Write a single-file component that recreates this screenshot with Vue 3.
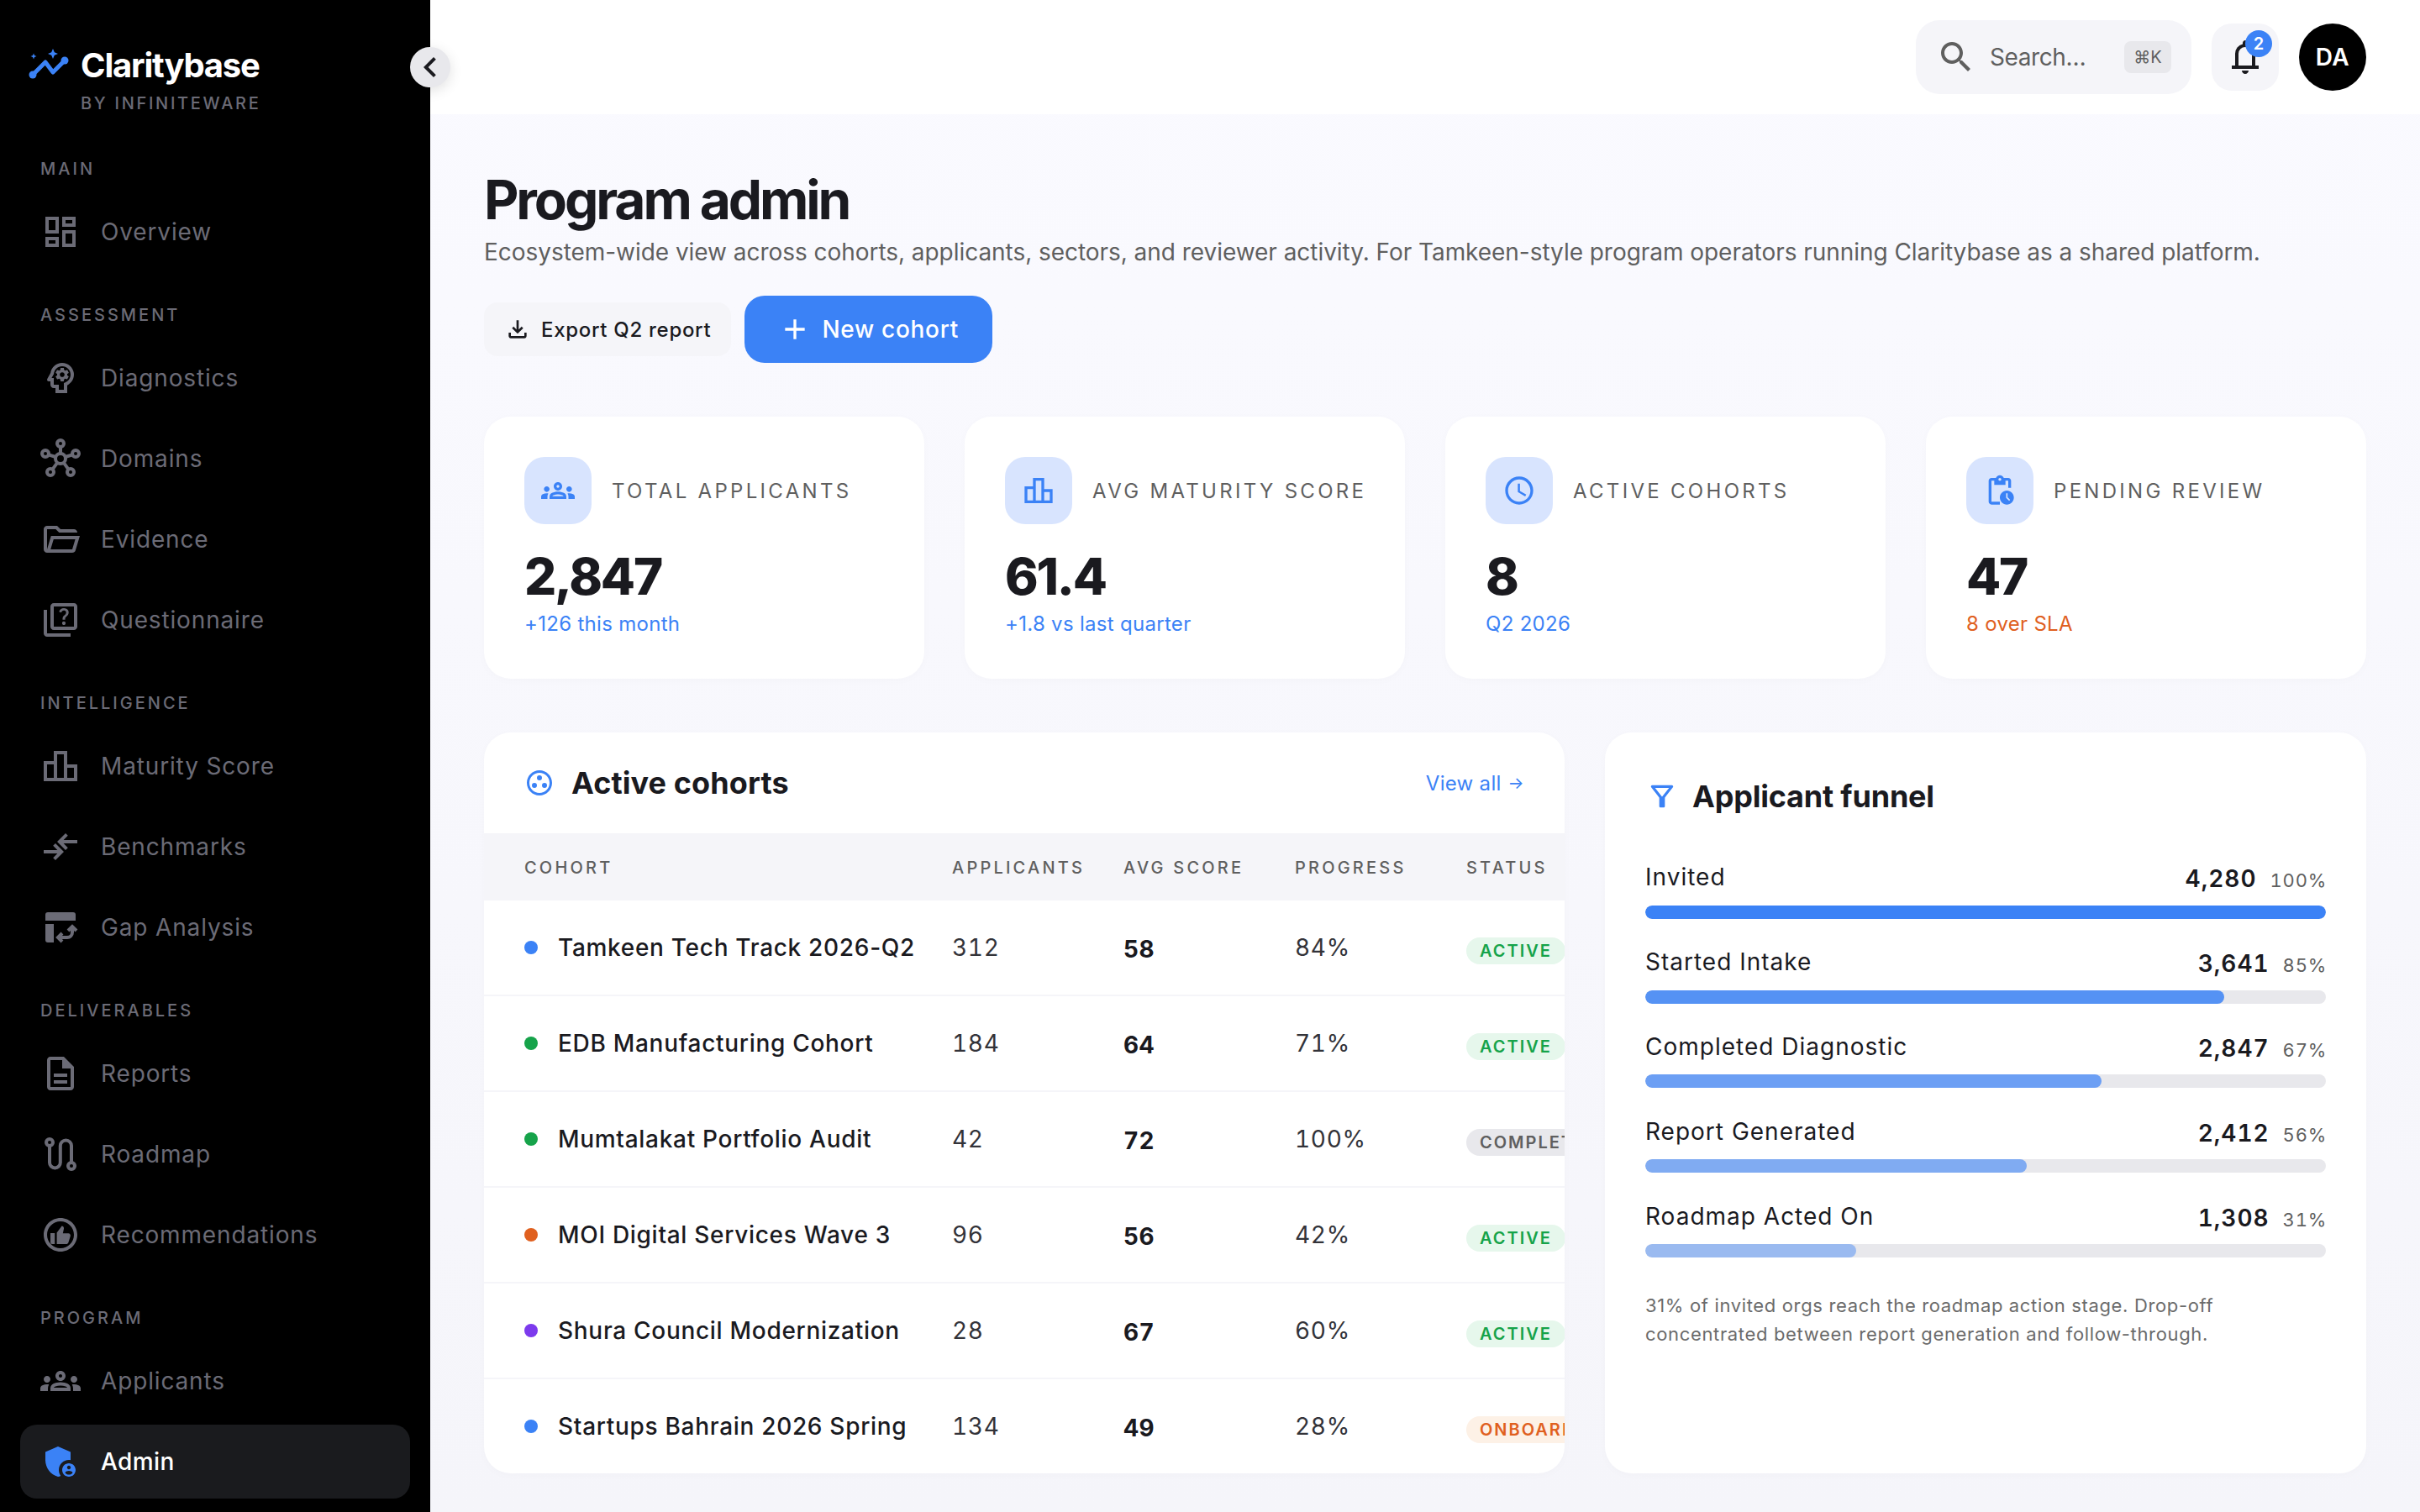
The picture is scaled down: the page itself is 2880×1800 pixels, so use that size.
<script setup>
const groups = [
  { label: 'MAIN', items: [{ n: 'Overview', i: 'dashboard' }] },
  { label: 'ASSESSMENT', items: [
    { n: 'Diagnostics', i: 'psychology' }, { n: 'Domains', i: 'hub' },
    { n: 'Evidence', i: 'folder' }, { n: 'Questionnaire', i: 'quiz' } ] },
  { label: 'INTELLIGENCE', items: [
    { n: 'Maturity Score', i: 'leaderboard' }, { n: 'Benchmarks', i: 'compare' }, { n: 'Gap Analysis', i: 'gap' } ] },
  { label: 'DELIVERABLES', items: [
    { n: 'Reports', i: 'description' }, { n: 'Roadmap', i: 'route' }, { n: 'Recommendations', i: 'recommend' } ] },
  { label: 'PROGRAM', items: [
    { n: 'Applicants', i: 'groups' }, { n: 'Admin', i: 'admin', active: true } ] },
]
const paths = {
  dashboard: 'M19 5v2h-4V5h4M9 5v6H5V5h4m10 8v6h-4v-6h4M9 17v2H5v-2h4M21 3h-8v6h8V3zM11 3H3v10h8V3zm10 8h-8v10h8V11zm-10 4H3v6h8v-6z',
  psychology: 'M15.82 7.22l-1 .4c-.21-.16-.43-.29-.67-.39L14 6.17c-.02-.1-.1-.17-.2-.17h-1.6c-.1 0-.18.07-.19.17l-.15 1.06c-.24.1-.47.23-.67.39l-1-.4c-.09-.03-.2 0-.24.09l-.8 1.38c-.05.09-.03.2.05.26l.85.66c-.03.12-.05.25-.05.38s.01.26.03.38l-.84.66c-.08.06-.1.17-.05.25l.8 1.39c.05.09.15.12.25.09l.99-.4c.21.16.43.29.68.39l.14 1.06c.02.1.1.17.2.17h1.6c.1 0 .18-.07.2-.17l.15-1.06c.24-.1.47-.23.67-.39l.99.4c.09.04.2 0 .24-.09l.8-1.39c.05-.09.03-.19-.05-.25l-.83-.66c.02-.12.03-.25.03-.38 0-.13-.01-.26-.03-.38l.85-.66c.08-.06.1-.17.05-.26l-.8-1.38c-.05-.09-.16-.12-.25-.09zM13 11.43c-.79 0-1.43-.64-1.43-1.43s.64-1.43 1.43-1.43 1.43.64 1.43 1.43-.64 1.43-1.43 1.43zM19.94 9.06C19.5 5.73 16.57 3 13 3 9.47 3 6.57 5.61 6.08 9l-1.93 3.48c-.41.66.07 1.52.85 1.52h1v2c0 1.1.9 2 2 2h1v3h7v-4.68c2.62-1.25 4.35-4.08 3.94-7.26zM14.89 14.63l-.89.42V19h-3v-3H8v-4H6.7l1.33-2.33C8.21 7.06 10.35 5 13 5c2.76 0 5 2.24 5 5 0 2.09-1.29 3.88-3.11 4.63z',
  folder: 'M4 20q-.825 0-1.413-.587T2 18V6q0-.825.588-1.412T4 4h6l2 2h8q.825 0 1.413.588T22 8H11.175l-2-2H4v12l2.4-8h17.1l-2.575 8.575q-.2.65-.738 1.038T19 20H4zm2.1-2H19l1.8-6H7.9l-1.8 6z',
  quiz: 'M4 6H2v14c0 1.1.9 2 2 2h14v-2H4V6zm16-4H8c-1.1 0-2 .9-2 2v12c0 1.1.9 2 2 2h12c1.1 0 2-.9 2-2V4c0-1.1-.9-2-2-2zm0 14H8V4h12v12zm-6.49-5.84c.41-.73 1.18-1.16 1.63-1.8.48-.68.21-1.94-1.14-1.94-.88 0-1.32.67-1.5 1.23l-1.37-.57C11.51 5.96 12.52 5 13.99 5c1.23 0 2.08.56 2.51 1.26.37.6.58 1.73.01 2.57-.63.93-1.23 1.21-1.56 1.81-.13.24-.18.4-.18 1.18h-1.52c.01-.41-.06-1.08.26-1.66zm-.56 3.79c0-.59.47-1.04 1.05-1.04.59 0 1.04.45 1.04 1.04 0 .58-.44 1.05-1.04 1.05-.58 0-1.05-.47-1.05-1.05z',
  leaderboard: 'M16 11V3H8v6H2v12h20V11h-6zm-6-6h4v14h-4V5zm-6 6h4v8H4v-8zm16 8h-4v-6h4v6z',
  compare: 'm9 20-1.4-1.4 2.575-2.6H2v-2h8.175L7.6 11.4 9 10l5 5-5 5Zm6-6-5-5 5-5 1.4 1.4L13.825 8H22v2h-8.175l2.575 2.6L15 14Z',
  description: 'M8 16h8v2H8zm0-4h8v2H8zm6-10H6c-1.1 0-2 .9-2 2v16c0 1.1.89 2 1.99 2H18c1.1 0 2-.9 2-2V8l-6-6zm4 18H6V4h7v5h5v11z',
  groups: 'M4 13c1.1 0 2-.9 2-2s-.9-2-2-2-2 .9-2 2 .9 2 2 2zm1.13 1.1c-.37-.06-.74-.1-1.13-.1-.99 0-1.93.21-2.78.58C.48 14.9 0 15.62 0 16.43V18h4.5v-1.61c0-.83.23-1.61.63-2.29zM20 13c1.1 0 2-.9 2-2s-.9-2-2-2-2 .9-2 2 .9 2 2 2zm4 3.43c0-.81-.48-1.53-1.22-1.85-.85-.37-1.79-.58-2.78-.58-.39 0-.76.04-1.13.1.4.68.63 1.46.63 2.29V18H24v-1.57zm-7.76-2.78c-1.17-.52-2.61-.9-4.24-.9-1.63 0-3.07.39-4.24.9C6.68 14.13 6 15.21 6 16.39V18h12v-1.61c0-1.18-.68-2.26-1.76-2.74zM8.07 16c.09-.23.13-.39.91-.69.97-.38 1.99-.56 3.02-.56s2.05.18 3.02.56c.77.3.81.46.91.69H8.07zM12 8c.55 0 1 .45 1 1s-.45 1-1 1-1-.45-1-1 .45-1 1-1m0-2c-1.66 0-3 1.34-3 3s1.34 3 3 3 3-1.34 3-3-1.34-3-3-3z',
  admin: 'M17 11c.34 0 .67.04 1 .09V6.27L10.5 3 3 6.27v4.91c0 4.54 3.2 8.79 7.5 9.82.55-.13 1.08-.32 1.6-.55-.69-.98-1.1-2.17-1.1-3.45 0-3.31 2.69-6 6-6zM17 13c-2.21 0-4 1.79-4 4s1.79 4 4 4 4-1.79 4-4-1.79-4-4-4zm0 1.38c.62 0 1.12.51 1.12 1.12s-.51 1.12-1.12 1.12-1.12-.51-1.12-1.12.5-1.12 1.12-1.12zm0 5.37c-.93 0-1.74-.46-2.24-1.17.05-.72 1.51-1.08 2.24-1.08s2.19.36 2.24 1.08c-.5.71-1.31 1.17-2.24 1.17z',
  schedule: 'M11.99 2C6.47 2 2 6.48 2 12s4.47 10 9.99 10C17.52 22 22 17.52 22 12S17.52 2 11.99 2zM12 20c-4.42 0-8-3.58-8-8s3.58-8 8-8 8 3.58 8 8-3.58 8-8 8zm.5-13H11v6l5.25 3.15.75-1.23-4.5-2.67z',
  pending: 'M17 12c-2.76 0-5 2.24-5 5s2.24 5 5 5 5-2.24 5-5-2.24-5-5-5zm1.65 7.35L16.5 17.2V14h1v2.79l1.85 1.85-.7.71zM18 3h-3.18C14.4 1.84 13.3 1 12 1s-2.4.84-2.82 2H6c-1.1 0-2 .9-2 2v15c0 1.1.9 2 2 2h6v-2H6V5h2v3h8V5h2v5h2V5c0-1.1-.9-2-2-2zm-6 2c-.55 0-1-.45-1-1s.45-1 1-1 1 .45 1 1-.45 1-1 1z',
  gap: 'M4.5 3h15A1.5 1.5 0 0 1 21 4.5V8H3V4.5A1.5 1.5 0 0 1 4.5 3zM3 10h5v11H4.5A1.5 1.5 0 0 1 3 19.5V10z',
  recommend: 'M12 2C6.48 2 2 6.48 2 12s4.48 10 10 10 10-4.48 10-10S17.52 2 12 2zm0 18c-4.41 0-8-3.59-8-8s3.59-8 8-8 8 3.59 8 8-3.59 8-8 8zM6 11h2.6v6.5H7a1 1 0 0 1-1-1V11zm3.8 6.5h5.6c.6 0 1.1-.4 1.3-.9l1.2-3.9c.2-.8-.4-1.6-1.2-1.600h-3.3l.6-2.7c.15-.9-.4-1.7-1.2-1.7L9.8 10.700v6.800z',
  plus: 'M19 13h-6v6h-2v-6H5v-2h6V5h2v6h6v2z',
  download: 'M18 15v3H6v-3H4v3c0 1.1.9 2 2 2h12c1.1 0 2-.9 2-2v-3h-2zm-1-4l-1.41-1.41L13 12.17V4h-2v8.17L8.41 9.59 7 11l5 5 5-5z',
  search: 'M15.5 14h-.79l-.28-.27C15.41 12.59 16 11.11 16 9.5 16 5.91 13.09 3 9.5 3S3 5.91 3 9.5 5.91 16 9.5 16c1.61 0 3.09-.59 4.23-1.57l.27.28v.79l5 4.99L20.49 19l-4.99-5zm-6 0C7.01 14 5 11.99 5 9.5S7.01 5 9.5 5 14 7.01 14 9.5 11.99 14 9.5 14z',
  bell: 'M4 19v-2h2v-7q0-2.075 1.25-3.688Q8.5 4.7 10.5 4.2v-.7q0-.625.438-1.062Q11.375 2 12 2t1.063.438q.437.437.437 1.062v.7q2 .5 3.25 2.112Q18 7.925 18 10v7h2v2ZM12 22q-.825 0-1.412-.587Q10 20.825 10 20h4q0 .825-.588 1.413Q12.825 22 12 22Zm-4-5h8v-7q0-1.65-1.175-2.825Q13.65 6 12 6q-1.65 0-2.825 1.175Q8 8.35 8 10Z',
  chevron: 'M15.41 7.41L14 6l-6 6 6 6 1.41-1.41L10.83 12z',
  groupWork: 'M12 2C6.48 2 2 6.48 2 12s4.48 10 10 10 10-4.48 10-10S17.52 2 12 2zm0 18c-4.41 0-8-3.59-8-8s3.59-8 8-8 8 3.59 8 8-3.59 8-8 8zM8 12a2 2 0 1 0 0 4 2 2 0 0 0 0-4zm4-6a2 2 0 1 0 0 4 2 2 0 0 0 0-4zm4 6a2 2 0 1 0 0 4 2 2 0 0 0 0-4z',
  filter: 'M7 6h10l-5.01 6.3L7 6zm-2.75-.39C6.27 8.2 10 13 10 13v6c0 .55.45 1 1 1h2c.55 0 1-.45 1-1v-6s3.72-4.8 5.74-7.39c.51-.66.04-1.61-.79-1.61H5.04c-.83 0-1.3.95-.79 1.61z',
}
const kpis = [
  { label: 'Total applicants', value: '2,847', sub: '+126 this month', icon: 'groups' },
  { label: 'Avg maturity score', value: '61.4', sub: '+1.8 vs last quarter', icon: 'leaderboard' },
  { label: 'Active cohorts', value: '8', sub: 'Q2 2026', icon: 'schedule' },
  { label: 'Pending review', value: '47', sub: '8 over SLA', icon: 'pending', warn: true },
]
const cohorts = [
  { name: 'Tamkeen Tech Track 2026-Q2', dot: '#3b82f6', apps: '312', score: '58', prog: '84%', status: 'Active', kind: 'ok' },
  { name: 'EDB Manufacturing Cohort', dot: '#16a34a', apps: '184', score: '64', prog: '71%', status: 'Active', kind: 'ok' },
  { name: 'Mumtalakat Portfolio Audit', dot: '#16a34a', apps: '42', score: '72', prog: '100%', status: 'Completed', kind: 'done' },
  { name: 'MOI Digital Services Wave 3', dot: '#e0601f', apps: '96', score: '56', prog: '42%', status: 'Active', kind: 'ok' },
  { name: 'Shura Council Modernization', dot: '#7c3aed', apps: '28', score: '67', prog: '60%', status: 'Active', kind: 'ok' },
  { name: 'Startups Bahrain 2026 Spring', dot: '#3b82f6', apps: '134', score: '49', prog: '28%', status: 'Onboarding', kind: 'warn' },
]
const funnel = [
  { name: 'Invited', n: '4,280', pct: 100, o: 1 },
  { name: 'Started Intake', n: '3,641', pct: 85, o: 0.85 },
  { name: 'Completed Diagnostic', n: '2,847', pct: 67, o: 0.72 },
  { name: 'Report Generated', n: '2,412', pct: 56, o: 0.6 },
  { name: 'Roadmap Acted On', n: '1,308', pct: 31, o: 0.45 },
]
</script>

<template>
  <div class="app">
    <aside class="side">
      <div class="brand">
        <div class="brand-row">
          <svg class="logo" width="48" height="40" viewBox="0 0 48 40">
            <path d="M5 31 20 16l9 12 14-14" fill="none" stroke="#3b82f6" stroke-width="5" stroke-linecap="round" stroke-linejoin="round"/>
            <circle cx="5" cy="31" r="4.5" fill="#3b82f6"/><circle cx="43" cy="14" r="4.5" fill="#3b82f6"/>
            <path d="M29 0l1.8 4.2L35 6l-4.2 1.800L29 12l-1.800-4.200L23 6l4.200-1.800z" fill="#3b82f6"/>
            <path d="M6 5.500l1 2.500 2.500 1-2.500 1-1 2.500-1-2.500L2.500 9 5 8z" fill="#3b82f6"/>
          </svg>
          <span class="brand-name">Claritybase</span>
        </div>
        <div class="brand-by">BY INFINITEWARE</div>
      </div>
      <section v-for="g in groups" :key="g.label" class="group">
        <div class="group-label">{{ g.label }}</div>
        <div class="group-items">
          <a v-for="it in g.items" :key="it.n" class="nav" :class="{ active: it.active }">
            <svg v-if="it.i === 'hub'" class="ni" viewBox="0 0 24 24" fill="none" stroke="currentColor" stroke-width="2">
              <circle cx="12" cy="12" r="3"/><circle cx="12" cy="3" r="2"/><circle cx="3" cy="9" r="2"/><circle cx="21" cy="9" r="2"/><circle cx="6" cy="20" r="2"/><circle cx="18" cy="20" r="2"/>
              <path d="M12 5v4M4.900 9.700 9.200 11M19.100 9.700 14.800 11M7.200 18.400l2.900-4M16.800 18.400l-2.900-4"/>
            </svg>
            <svg v-else-if="it.i === 'route'" class="ni" viewBox="0 0 24 24" fill="none" stroke="currentColor" stroke-width="2">
              <circle cx="5.500" cy="5" r="2"/><circle cx="18.500" cy="19" r="2"/>
              <path d="M5.500 7v10a3.200 3.200 0 0 0 6.400 0V7a3.300 3.300 0 0 1 6.600 0v10"/>
            </svg>
            <svg v-else-if="it.i === 'gap'" class="ni" viewBox="0 0 24 24">
              <path :d="paths.gap" fill="currentColor"/>
              <path d="M13 15.500 10.500 18l2.500 2.500M10.500 18H16a3 3 0 0 0 3-3v-3M16.500 14l2.500-2.500 2.500 2.500" fill="none" stroke="currentColor" stroke-width="2"/>
            </svg>
            <svg v-else class="ni" viewBox="0 0 24 24"><path :d="paths[it.i]" fill="currentColor"/></svg>
            <span>{{ it.n }}</span>
          </a>
        </div>
      </section>
    </aside>

    <div class="collapse"><svg viewBox="0 0 24 24"><path :d="paths.chevron" fill="#1a1a1f"/></svg></div>

    <div class="page">
      <header class="top">
        <div class="search">
          <svg class="ni" viewBox="0 0 24 24"><path :d="paths.search" fill="#5f5f5f"/></svg>
          <span class="search-text">Search…</span>
          <kbd class="kbd">⌘K</kbd>
        </div>
        <button class="bell">
          <svg class="ni" viewBox="0 0 24 24"><path :d="paths.bell" fill="#1a1a1f"/></svg>
          <span class="badge">2</span>
        </button>
        <div class="avatar">DA</div>
      </header>

      <main class="main">
        <h1 class="title">Program admin</h1>
        <p class="subtitle">Ecosystem-wide view across cohorts, applicants, sectors, and reviewer activity. For Tamkeen-style program operators running Claritybase as a shared platform.</p>
        <div class="actions">
          <button class="btn ghost"><svg viewBox="0 0 24 24"><path :d="paths.download" fill="#1a1a1f"/></svg>Export Q2 report</button>
          <button class="btn primary"><svg viewBox="0 0 24 24"><path :d="paths.plus" fill="#fff"/></svg>New cohort</button>
        </div>

        <div class="kpis">
          <div v-for="k in kpis" :key="k.label" class="card kpi">
            <div class="kpi-head">
              <div class="kpi-icon"><svg viewBox="0 0 24 24"><path :d="paths[k.icon]" fill="#3b82f6"/></svg></div>
              <div class="kpi-label">{{ k.label }}</div>
            </div>
            <div class="kpi-value">{{ k.value }}</div>
            <div class="kpi-sub" :class="{ warn: k.warn }">{{ k.sub }}</div>
          </div>
        </div>

        <div class="lower">
          <div class="card table-card">
            <div class="tc-head">
              <div class="tc-title">
                <svg viewBox="0 0 24 24"><path :d="paths.groupWork" fill="#3b82f6"/></svg>
                <h2>Active cohorts</h2>
              </div>
              <a class="view-all">View all <span class="arrow">→</span></a>
            </div>
            <div class="row thead">
              <div>Cohort</div><div>Applicants</div><div>Avg score</div><div>Progress</div><div>Status</div>
            </div>
            <div v-for="c in cohorts" :key="c.name" class="row tr">
              <div class="cname"><i class="dot" :style="{ background: c.dot }"></i>{{ c.name }}</div>
              <div class="num">{{ c.apps }}</div>
              <div class="score">{{ c.score }}</div>
              <div class="num">{{ c.prog }}</div>
              <div><span class="pill" :class="c.kind">{{ c.status }}</span></div>
            </div>
          </div>

          <div class="card funnel">
            <div class="f-title">
              <svg viewBox="0 0 24 24"><path :d="paths.filter" fill="#3b82f6"/></svg>
              <h2>Applicant funnel</h2>
            </div>
            <div v-for="f in funnel" :key="f.name" class="f-row">
              <div class="f-line">
                <span class="f-name">{{ f.name }}</span>
                <span class="f-right"><b class="f-n">{{ f.n }}</b><span class="f-pct">{{ f.pct }}%</span></span>
              </div>
              <div class="track"><div class="fill" :style="{ width: f.pct + '%', opacity: f.o }"></div></div>
            </div>
            <p class="f-note">31% of invited orgs reach the roadmap action stage. Drop-off concentrated between report generation and follow-through.</p>
          </div>
        </div>
      </main>
    </div>
  </div>
</template>

<style>
html, body { margin: 0; background: #fff; }
</style>

<style scoped>
* { box-sizing: border-box; }
.app { display: flex; width: 2880px; height: 1800px; overflow: hidden; position: relative; font-family: Inter, "Liberation Sans", sans-serif; color: #1a1a1f; }
.side { width: 512px; flex: none; background: #000; padding: 0 24px; }
.brand { height: 189px; padding: 50px 0 0 10px; }
.brand-row { display: flex; align-items: center; gap: 14px; }
.logo { flex: none; }
.brand-name { color: #fff; font-size: 40px; font-weight: 700; letter-spacing: -1.2px; line-height: 56px; }
.brand-by { margin: 5px 0 0 62px; color: #6b6b76; font-size: 20px; font-weight: 500; letter-spacing: 2.7px; line-height: 24px; }
.group + .group { margin-top: 43px; }
.group-label { padding-left: 24px; height: 24px; line-height: 24px; font-size: 20px; font-weight: 500; letter-spacing: 3px; color: #6b6b76; margin-bottom: 19px; }
.group-items { display: flex; flex-direction: column; gap: 8px; }
.nav { display: flex; align-items: center; gap: 24px; height: 88px; padding: 0 24px; border-radius: 20px; font-size: 28px; letter-spacing: 0.85px; color: #6b6b76; }
.nav.active { background: #1a1b1e; color: #fff; font-weight: 500; letter-spacing: .4px; }
.nav.active .ni { color: #3b82f6; }
.ni { width: 48px; height: 48px; flex: none; display: block; }
.collapse { position: absolute; left: 488px; top: 56px; width: 48px; height: 48px; border-radius: 50%; background: #e8e8ec; box-shadow: 0 4px 16px rgba(0,0,0,.12); z-index: 3; }
.collapse svg { width: 48px; height: 48px; display: block; }

.page { flex: 1; min-width: 0; display: flex; flex-direction: column; background: linear-gradient(180deg, #fafaff 0%, #f5f5fa 100%); }
.top { height: 136px; flex: none; background: #fff; display: flex; align-items: center; justify-content: flex-end; gap: 24px; padding-right: 64px; }
.search { width: 328px; height: 88px; border-radius: 28px; background: #f5f5f9; display: flex; align-items: center; padding: 0 24px; gap: 16px; }
.search-text { flex: 1; font-size: 28px; color: #5f5f5f; letter-spacing: -.4px; }
.kbd { width: 56px; height: 38px; border-radius: 8px; background: #e8e8ec; font-family: Inter, "DejaVu Sans", sans-serif; font-size: 20px; color: #5f5f5f; display: flex; align-items: center; justify-content: center; }
.bell { position: relative; width: 80px; height: 80px; border: 0; border-radius: 24px; background: #f5f5f9; padding: 16px; }
.badge { position: absolute; left: 40px; top: 8px; width: 32px; height: 32px; border-radius: 50%; background: #3b82f6; color: #fff; font: 600 20px/32px Inter, sans-serif; text-align: center; }
.avatar { width: 80px; height: 80px; border-radius: 50%; background: #000; color: #fff; font-size: 28px; font-weight: 600; letter-spacing: .5px; display: flex; align-items: center; justify-content: center; }

.main { flex: 1; padding: 66px 64px 0; min-height: 0; }
.title { margin: 0; font-size: 64px; line-height: 72px; font-weight: 700; letter-spacing: -3.1px; color: #1a1a1f; }
.subtitle { margin: 6px 0 0; font-size: 28px; line-height: 40px; letter-spacing: -.045px; color: #5f5f5f; white-space: nowrap; }
.actions { display: flex; align-items: center; gap: 16px; margin-top: 32px; }
.btn { border: 0; display: inline-flex; align-items: center; font-family: inherit; }
.btn.ghost { height: 64px; padding: 0 24px; gap: 12px; border-radius: 16px; background: #f5f5f9; color: #1a1a1f; font-size: 24px; font-weight: 500; letter-spacing: .7px; }
.btn.ghost svg { width: 32px; height: 32px; }
.btn.primary { height: 80px; padding: 0 40px; gap: 12px; border-radius: 24px; background: #3b82f6; color: #fff; font-size: 28px; font-weight: 500; letter-spacing: .7px; }
.btn.primary svg { width: 40px; height: 40px; }

.kpis { display: grid; grid-template-columns: repeat(4, minmax(0, 1fr)); gap: 48px; margin-top: 64px; }
.card { background: #fff; border-radius: 32px; box-shadow: 0 2px 12px rgba(30,30,60,.02); }
.kpi { height: 312px; padding: 48px; }
.kpi-head { display: flex; align-items: center; gap: 24px; }
.kpi-icon { width: 80px; height: 80px; border-radius: 24px; background: #d8e4fe; display: flex; align-items: center; justify-content: center; flex: none; }
.kpi-icon svg { width: 40px; height: 40px; }
.kpi-label { font-size: 24px; text-transform: uppercase; letter-spacing: 3.3px; color: #5f5f5f; white-space: nowrap; }
.kpi-value { margin-top: 26px; font-size: 60px; line-height: 72px; font-weight: 800; letter-spacing: -2.2px; color: #1a1a1f; }
.kpi-sub { margin-top: 3px; font-size: 24px; line-height: 36px; letter-spacing: .3px; color: #3b82f6; }
.kpi-sub.warn { color: #e0601f; }

.lower { display: grid; grid-template-columns: 1286px 1fr; gap: 48px; margin-top: 64px; }
.table-card { height: 882px; overflow: hidden; }
.tc-head { height: 120px; display: flex; align-items: center; justify-content: space-between; padding: 0 48px; }
.tc-title { display: flex; align-items: center; gap: 20px; }
.tc-title svg { width: 36px; height: 36px; }
h2 { margin: 0; font-size: 36px; font-weight: 700; letter-spacing: -.2px; color: #1a1a1f; }
.tc-title h2 { letter-spacing: .1px; }
.view-all { font-size: 24px; color: #3b82f6; letter-spacing: .3px; display: inline-flex; align-items: center; gap: 8px; }
.arrow { font-size: 20px; }
.row { display: grid; grid-template-columns: 557px 204px 204px 204px 117px; align-items: center; }
.row > :first-child { padding-left: 48px; }
.thead { height: 80px; padding-top: 1px; background: #f5f5f9; font-size: 20px; font-weight: 500; letter-spacing: 3.2px; text-transform: uppercase; color: #5f5f5f; }
.tr { height: 114px; border-bottom: 2px solid #f5f5f9; font-size: 28px; letter-spacing: .7px; }
.tr:last-child { height: 112px; border-bottom: 0; }
.cname { display: flex; align-items: center; gap: 24px; font-weight: 450; white-space: nowrap; }
.dot { width: 16px; height: 16px; border-radius: 50%; flex: none; }
.num { color: #333339; font-variant-numeric: tabular-nums; }
.score { font-weight: 700; font-size: 28px; font-variant-numeric: tabular-nums; letter-spacing: .5px; padding-top: 4px; }
.pill { display: inline-flex; align-items: center; height: 32px; padding: 0 16px; border-radius: 16px; font-size: 20px; font-weight: 600; letter-spacing: 2px; text-transform: uppercase; white-space: nowrap; margin-top: 8px; }
.pill.ok { background: #e6f7ec; color: #16a34a; }
.pill.done { background: #e8e8ec; color: #5f5f5f; }
.pill.warn { background: #fdf1e6; color: #e0601f; }

.funnel { height: 882px; padding: 48px; }
.f-title { display: flex; align-items: center; gap: 16px; height: 56px; margin-bottom: 49px; }
.f-title svg { width: 40px; height: 40px; }
.f-row { margin-bottom: 32px; }
.f-line { height: 36.8px; margin-bottom: 16px; display: flex; justify-content: space-between; align-items: center; }
.f-name { font-size: 28px; letter-spacing: 1px; position: relative; top: 1px; }
.f-right { display: flex; align-items: baseline; gap: 16px; position: relative; top: 3px; }
.f-n { font-weight: 600; font-size: 28px; font-variant-numeric: tabular-nums; letter-spacing: 1px; }
.f-pct { font-size: 22px; color: #5f5f5f; font-variant-numeric: tabular-nums; letter-spacing: .75px; margin-right: -1px; }
.track { height: 16px; border-radius: 8px; background: #e8e8ec; overflow: hidden; }
.fill { height: 100%; border-radius: 8px; background: #3b82f6; }
.f-note { margin: 40px 0 0; font-size: 22px; line-height: 34px; letter-spacing: .65px; color: #6b6b6b; }
</style>
